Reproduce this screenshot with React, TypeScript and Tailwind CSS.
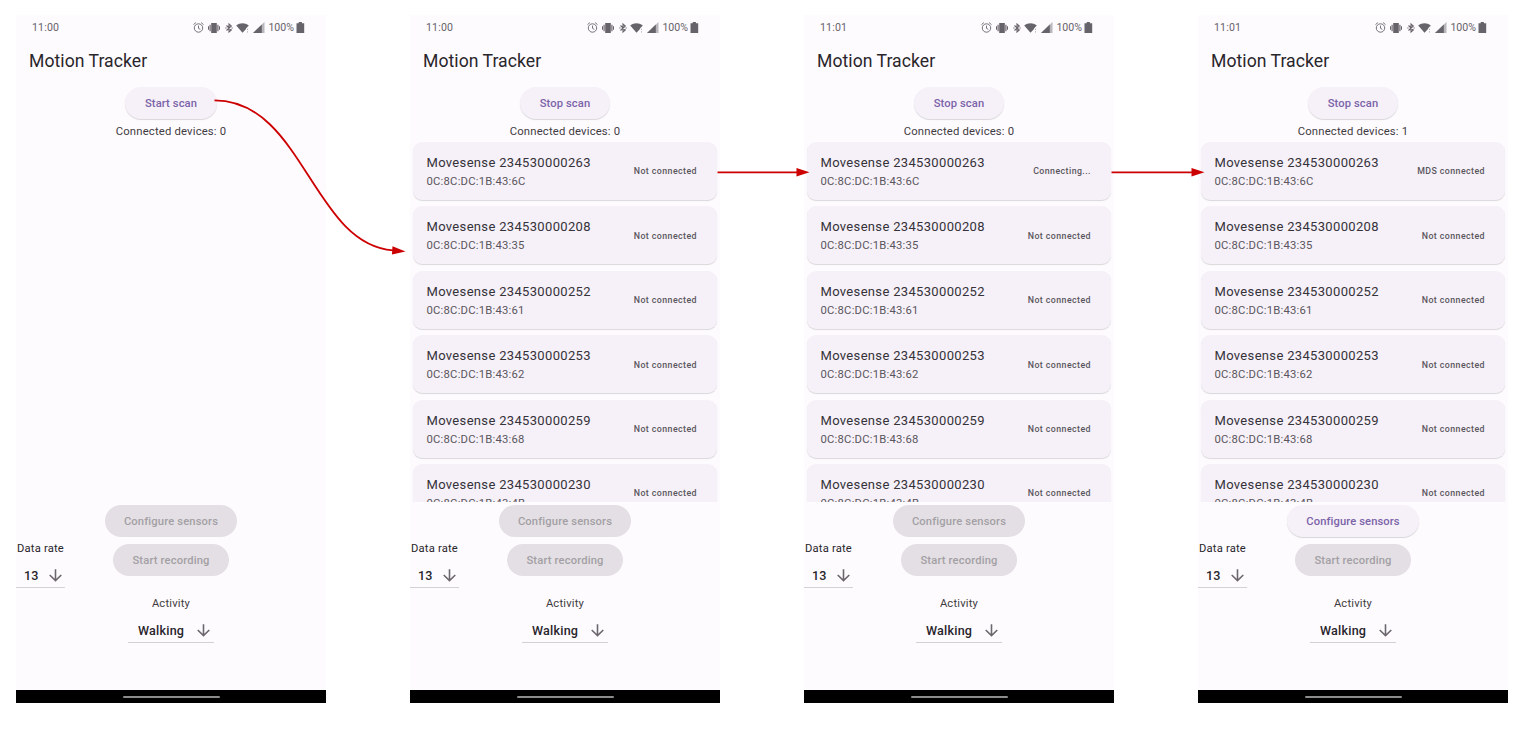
import { MdArrowDownward } from "react-icons/md";

type Device = { serial: string; mac: string };

const devices: Device[] = [
  { serial: "234530000263", mac: "0C:8C:DC:1B:43:6C" },
  { serial: "234530000208", mac: "0C:8C:DC:1B:43:35" },
  { serial: "234530000252", mac: "0C:8C:DC:1B:43:61" },
  { serial: "234530000253", mac: "0C:8C:DC:1B:43:62" },
  { serial: "234530000259", mac: "0C:8C:DC:1B:43:68" },
  { serial: "234530000230", mac: "0C:8C:DC:1B:43:4B" },
];

type Screen = {
  time: string;
  scanLabel: string;
  connected: number;
  firstStatus?: string;
  canConfigure?: boolean;
};

const screens: Screen[] = [
  { time: "11:00", scanLabel: "Start scan", connected: 0 },
  { time: "11:00", scanLabel: "Stop scan", connected: 0, firstStatus: "Not connected" },
  { time: "11:01", scanLabel: "Stop scan", connected: 0, firstStatus: "Connecting..." },
  { time: "11:01", scanLabel: "Stop scan", connected: 1, firstStatus: "MDS connected", canConfigure: true },
];

function StatusBar({ time }: { time: string }) {
  return (
    <div className="flex h-[26px] shrink-0 items-center justify-between pr-[21px] pl-4 text-[10.6px] text-[#67636a]">
      <span className="tracking-[0.15px]">{time}</span>
      <div className="flex items-center">
        <svg className="mr-[4px] h-[11px] w-[11px]" viewBox="0 0 11 11" fill="none" stroke="currentColor" strokeWidth="0.9">
          <circle cx="5.500" cy="6" r="4.200" />
          <path d="M5.500 3.600V6.300L7.300 7.400M0.500 2.600 2.900 0.600M10.500 2.600 8.100 0.600" />
        </svg>
        <svg className="mr-[5px] h-[10px] w-[12px]" viewBox="0 0 12 10" fill="currentColor">
          <path d="M3.200 0h5.600v10H3.200zM1.500 1.700h1.200v6.600H1.500zM0 3.200h1v3.600H0zM9.300 1.700h1.200v6.600H9.300zM11 3.200h1v3.600h-1z" />
        </svg>
        <svg className="mr-[3px] h-[10px] w-[8px]" viewBox="0 0 8 10" fill="none" stroke="currentColor" strokeWidth="1.100">
          <path d="M1.500 2.500 6.300 7 4 9V1L6.300 3 1.500 7.500" />
          <path d="M0.300 5h1.200M6.500 5h1.200" />
        </svg>
        <svg className="mr-[3px] h-[10px] w-[14px]" viewBox="0 0 14 10" fill="currentColor">
          <path d="M6.500 9.700 0.200 2.500C2.200 0.900 4.300 0.200 6.500 0.200s4.300 0.700 6.300 2.300L10 5.600v0.300z" />
          <path d="M11 5.800h1v1.300h-1zM11 8.300h1v1.200h-1z" opacity="0.5" />
        </svg>
        <svg className="mr-[3px] h-[11px] w-[12px]" viewBox="0 0 12 11" fill="currentColor">
          <path d="M0 11 11.500 0v11z" opacity="0.45" />
          <path d="M0 11 8.800 2.600V11z" />
        </svg>
        <span className="mr-[2px]">100%</span>
        <svg className="h-[11px] w-[9px]" viewBox="0 0 9 11" fill="currentColor">
          <path d="M2.700 0h3.200v1.200H8.200V11H0.500V1.200h2.200z" />
        </svg>
      </div>
    </div>
  );
}

function PillButton({ label, disabled }: { label: string; disabled?: boolean }) {
  return (
    <button
      className={
        disabled
          ? "h-8 shrink-0 rounded-full bg-[#e4dfe4] px-[19px] pt-[2px] text-[11.2px] font-medium tracking-[0.15px] text-[#a39fa5]"
          : "h-8 shrink-0 rounded-full bg-[#f6f1f9] px-[19.500px] pt-[2px] text-[11.2px] font-medium tracking-[0.1px] text-[#7b63a8] shadow-[0_1px_1px_rgba(0,0,0,0.15)]"
      }
    >
      {label}
    </button>
  );
}

function DeviceCard({ device, status }: { device: Device; status: string }) {
  return (
    <div className="flex h-[58px] shrink-0 items-center justify-between rounded-[9px] bg-[#f6f1f8] pr-5 pl-[13.500px] shadow-[0_1px_1px_rgba(0,0,0,0.14)]">
      <div className="pt-[3px]">
        <div className="text-[13px] leading-[18px] tracking-[0.330px] text-[#353238]">Movesense {device.serial}</div>
        <div className="text-[11.300px] leading-[19px] tracking-[0.200px] text-[#5a565d]">{device.mac}</div>
      </div>
      <span className="pt-[2px] text-[8.800px] font-medium tracking-[0.430px] text-[#5a565d]">{status}</span>
    </div>
  );
}

function Dropdown({ value, wide }: { value: string; wide?: boolean }) {
  return (
    <div
      className={
        wide
          ? "flex h-[25px] w-[86px] items-center justify-between border-b border-[#d5d0d6] pr-px pl-[10px]"
          : "flex h-[25px] w-[49px] items-center justify-between border-b border-[#d5d0d6] pl-2"
      }
    >
      <span className="pt-[2px] text-[12.600px] font-medium tracking-[0.200px] text-[#28252b]">{value}</span>
      <MdArrowDownward className="size-[19px] text-[#6b676d]" />
    </div>
  );
}

function Phone({ screen }: { screen: Screen }) {
  return (
    <section className="flex h-[688px] w-[310px] shrink-0 flex-col bg-[#fefbff]">
      <StatusBar time={screen.time} />
      <h1 className="h-[46px] shrink-0 pl-[13px] text-[17.600px] leading-[40px] tracking-[0.050px] text-[#29262b]">Motion Tracker</h1>
      <div className="flex h-[55px] shrink-0 flex-col items-center">
        <PillButton label={screen.scanLabel} />
        <p className="text-[11.300px] leading-[25px] tracking-[0.170px] text-[#3e3b41]">Connected devices: {screen.connected}</p>
      </div>
      <div className="flex h-[360px] shrink-0 flex-col gap-[6.400px] overflow-hidden px-[3px]">
        {screen.firstStatus &&
          devices.map((device, i) => (
            <DeviceCard key={device.serial} device={device} status={i === 0 ? screen.firstStatus! : "Not connected"} />
          ))}
      </div>
      <div className="flex h-[38px] shrink-0 justify-center pt-[3px]">
        <PillButton label="Configure sensors" disabled={!screen.canConfigure} />
      </div>
      <div className="grid h-[52px] shrink-0 grid-cols-[1fr_auto_1fr]">
        <div className="flex flex-col">
          <span className="h-[23px] pl-px text-[11.200px] leading-[17px] tracking-[0.200px] text-[#29262b]">Data rate</span>
          <Dropdown value="13" />
        </div>
        <div className="pt-[4px]">
          <PillButton label="Start recording" disabled />
        </div>
      </div>
      <div className="flex flex-1 flex-col items-center pt-[3px]">
        <span className="h-[23px] text-[11.200px] leading-[17px] tracking-[0.200px] text-[#3e3b41]">Activity</span>
        <Dropdown value="Walking" wide />
      </div>
      <div className="flex h-[13px] shrink-0 items-center justify-center bg-black">
        <div className="h-[2px] w-[97px] rounded-full bg-[#8c8c8c]" />
      </div>
    </section>
  );
}

function FlowArrows() {
  return (
    <svg
      className="pointer-events-none absolute top-0 left-0 h-[730px] w-[1537px]"
      viewBox="0 0 1537 730"
      fill="none"
      stroke="#cc0000"
      strokeWidth="1.800"
    >
      <path d="M214.500 100.300C303 100.300 313 245 393 250.300" />
      <path d="M717.500 172.300H798M1111.500 172.300H1193" />
      <g fill="#cc0000" stroke="none">
        <path d="M405.500 251.500 392.500 246.200 392 254.500z" />
        <path d="M809.500 172.300 796.500 168v8.600zM1204.500 172.300 1191.500 168v8.600z" />
      </g>
    </svg>
  );
}

export default function App() {
  return (
    <main className="relative flex h-[730px] w-[1537px] gap-[84px] overflow-hidden bg-white pt-[15px] pl-4 font-[Roboto,sans-serif]">
      {screens.map((screen, i) => (
        <Phone key={i} screen={screen} />
      ))}
      <FlowArrows />
    </main>
  );
}
